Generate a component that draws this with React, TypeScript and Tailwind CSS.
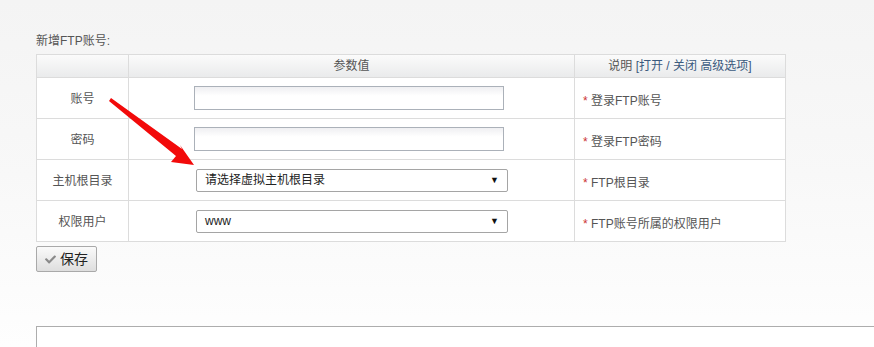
import React from 'react';
import { FaCheck } from 'react-icons/fa';

const font = "font-['Liberation_Sans','Noto_Sans_CJK_SC',sans-serif]";

const rows = [
  { label: '账号', kind: 'input', note: '登录FTP账号' },
  { label: '密码', kind: 'input', note: '登录FTP密码' },
  { label: '主机根目录', kind: 'select', value: '请选择虚拟主机根目录', note: 'FTP根目录' },
  { label: '权限用户', kind: 'select', value: 'www', note: 'FTP账号所属的权限用户' },
];

const App: React.FC = () => {
  return (
    <div className={`relative h-[347px] overflow-hidden bg-gradient-to-b from-[#f4f4f4] via-[#f8f8f8] to-[#fefefe] pl-[36px] pt-[32px] text-[12px] ${font}`}>
      <div className="leading-[18px] text-[#555]">新增FTP账号:</div>

      <table className="mt-[4px] w-[750px] border-collapse">
        <thead>
          <tr className="h-[23px] bg-gradient-to-b from-[#fbfbfb] to-[#e9eaeb] text-[#555]">
            <th className="w-[92px] border border-[#dcdcdc] font-normal"></th>
            <th className="w-[446px] border border-[#dcdcdc] font-normal">参数值</th>
            <th className="border border-[#dcdcdc] font-normal">
              说明 <span className="text-[#3b5a7e]">[打开 / 关闭 高级选项]</span>
            </th>
          </tr>
        </thead>
        <tbody className="bg-white">
          {rows.map((r) => (
            <tr key={r.label} className="h-[41px]">
              <td className="border border-[#dcdcdc] pt-[2px] text-center text-[#555]">{r.label}</td>
              <td className="border border-[#dcdcdc]">
                {r.kind === 'input' ? (
                  <div className="ml-[65px] h-[24px] w-[310px] border border-[#abb1b9] bg-gradient-to-b from-[#efeff2] to-white to-40%"></div>
                ) : (
                  <div className="ml-[67px] flex h-[23px] w-[312px] items-center justify-between rounded-[2px] border border-[#a5a5a5] bg-white pl-[8px] pr-[8px] text-[#222]">
                    <span className="leading-[14px]">{r.value}</span>
                    <span className="text-[9px] leading-none text-[#111]">▼</span>
                  </div>
                )}
              </td>
              <td className="border border-[#dcdcdc] pl-[8px] pt-[6px] text-[#555]">
                <span className="text-[#c33]">*</span> {r.note}
              </td>
            </tr>
          ))}
        </tbody>
      </table>

      <button className="mt-[4px] flex h-[26px] w-[61px] items-center justify-center gap-[4px] rounded-[2px] border border-[#a9a9a9] bg-gradient-to-b from-[#fafafa] to-[#dedede] text-[14px] text-[#222]">
        <FaCheck size={11} color="#8a8a8a" />
        <span>保存</span>
      </button>

      <div className="mt-[54px] h-[40px] w-[900px] border border-[#adadad] bg-white"></div>

      <svg className="pointer-events-none absolute left-0 top-0" width="874" height="347">
        <polygon points="109,101 111,98 182,149 180,145 194,165 171,162 176,156" fill="#f20a0a" />
      </svg>
    </div>
  );
};

export default App;
